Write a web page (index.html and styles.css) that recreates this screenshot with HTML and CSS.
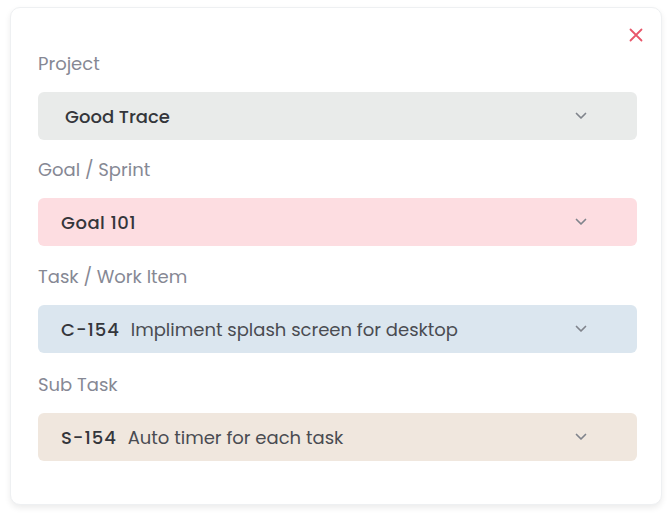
FILE: index.html
```html
<!DOCTYPE html>
<html>
<head>
<meta charset="utf-8">
<link rel="stylesheet" href="styles.css">
</head>
<body>
<div class="card">
  <button class="close" aria-label="Close">
    <svg width="14" height="14" viewBox="0 0 14 14"><path d="M1.5 1.5 L12.5 12.5 M12.5 1.5 L1.5 12.5" stroke="#e8566a" stroke-width="1.8" stroke-linecap="round"/></svg>
  </button>
  <div class="field">
    <div class="label">Project</div>
    <div class="select select-project">
      <span class="value value-indent"><b>Good Trace</b></span>
      <svg class="chev" width="12" height="8" viewBox="0 0 12 8"><path d="M1.5 1.5 L6 6 L10.5 1.5" fill="none" stroke="#80848c" stroke-width="1.7" stroke-linecap="round" stroke-linejoin="round"/></svg>
    </div>
  </div>
  <div class="field">
    <div class="label">Goal / Sprint</div>
    <div class="select select-goal">
      <span class="value"><b class="goal">Goal 101</b></span>
      <svg class="chev" width="12" height="8" viewBox="0 0 12 8"><path d="M1.5 1.5 L6 6 L10.5 1.5" fill="none" stroke="#80848c" stroke-width="1.7" stroke-linecap="round" stroke-linejoin="round"/></svg>
    </div>
  </div>
  <div class="field field-task">
    <div class="label">Task / Work Item</div>
    <div class="select select-task">
      <span class="value"><b class="code">C-154</b> Impliment splash screen for desktop</span>
      <svg class="chev" width="12" height="8" viewBox="0 0 12 8"><path d="M1.5 1.5 L6 6 L10.5 1.5" fill="none" stroke="#80848c" stroke-width="1.7" stroke-linecap="round" stroke-linejoin="round"/></svg>
    </div>
  </div>
  <div class="field field-last">
    <div class="label">Sub Task</div>
    <div class="select select-sub">
      <span class="value"><b class="code">S-154</b> Auto timer for each task</span>
      <svg class="chev" width="12" height="8" viewBox="0 0 12 8"><path d="M1.5 1.5 L6 6 L10.5 1.5" fill="none" stroke="#80848c" stroke-width="1.7" stroke-linecap="round" stroke-linejoin="round"/></svg>
    </div>
  </div>
</div>
</body>
</html>
```

FILE: styles.css
```css
* { box-sizing: border-box; }
html, body { margin: 0; padding: 0; background: #ffffff; }
body {
  font-family: "Poppins", "Inter", "Noto Sans", sans-serif;
  width: 672px;
  height: 518px;
  padding: 7px 10px 0 10px;
}
.card {
  position: relative;
  width: 652px;
  height: 498px;
  background: #fff;
  border: 1px solid #eef0f2;
  border-radius: 10px;
  box-shadow: 0 3px 6px rgba(0, 0, 0, 0.08);
  padding: 43px 24px 0 27px;
  display: flex;
  flex-direction: column;
  gap: 17px;
}
.close {
  position: absolute;
  top: 20px;
  right: 18px;
  border: 0;
  background: none;
  padding: 0;
  width: 14px;
  height: 14px;
  display: flex;
}
.field { display: flex; flex-direction: column; }
.field-task { margin-top: 1px; }
.field-last { margin-top: 2px; }
.label {
  font-size: 18px;
  line-height: 26px;
  color: #868894;
  margin-bottom: 15px;
}
.select {
  height: 48px;
  border-radius: 6px;
  display: flex;
  align-items: center;
  justify-content: space-between;
  padding: 0 50px 0 23px;
}
.select-project { background: #e9ebea; }
.select-goal { background: #fddde1; }
.select-task { background: #dbe6ef; }
.select-sub { background: #f0e7de; }
.value {
  font-size: 18px;
  color: #4a4c52;
  white-space: nowrap;
}
.value b {
  font-weight: 500;
  color: #34363b;
}
.value b.code {
  letter-spacing: 1px;
  margin-right: 6px;
}
.value b.goal { letter-spacing: 0.5px; }
.value-indent { padding-left: 4px; }
.chev { display: block; }
```
